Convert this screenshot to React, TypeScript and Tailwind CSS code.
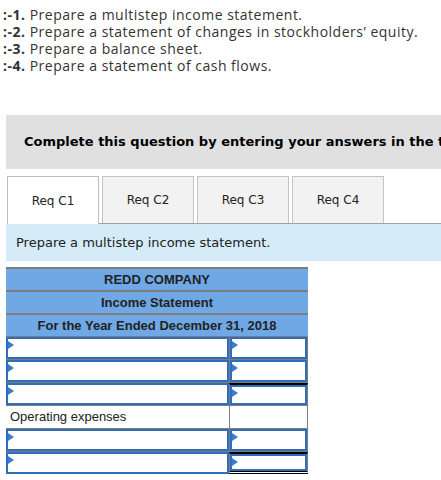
import type { ReactNode } from "react";

const parts = [
  { num: "-1.", text: "Prepare a multistep income statement." },
  { num: "-2.", text: "Prepare a statement of changes in stockholders’ equity." },
  { num: "-3.", text: "Prepare a balance sheet." },
  { num: "-4.", text: "Prepare a statement of cash flows." },
];

const tabs = ["Req C2", "Req C3", "Req C4"];

type Rule = "none" | "top" | "total";

interface Row {
  label?: string;
  rule: Rule;
}

const rows: Row[] = [
  { rule: "none" },
  { rule: "none" },
  { rule: "top" },
  { label: "Operating expenses", rule: "none" },
  { rule: "none" },
  { rule: "total" },
];

function Marker() {
  return (
    <span className="absolute left-0 top-[2px] h-0 w-0 border-y-[4px] border-l-[6px] border-y-transparent border-l-[#3a7bd5]" />
  );
}

function InputBox() {
  return (
    <div className="relative h-full w-full border-2 border-[#2f6dbd] bg-white">
      <Marker />
    </div>
  );
}

function HeaderRow({ children }: { children: ReactNode }) {
  return (
    <div className="flex h-[23px] items-center justify-center border-t-2 border-[#7d7d7d] bg-[#6fa8e4] text-[13px] font-bold text-[#222]">
      {children}
    </div>
  );
}

function AmountCell({ rule, empty }: { rule: Rule; empty?: boolean }) {
  const top = rule === "top" || rule === "total" ? "border-t-2 border-t-black" : "";
  const bottom = rule === "total" ? "border-b-[3px] border-double border-b-black" : "";
  return (
    <div className={`flex flex-col border-l border-r border-[#7d7d7d] ${top} ${bottom}`}>
      {empty ? <div className="h-full" /> : <InputBox />}
    </div>
  );
}

export default function App() {
  return (
    <div className="h-[480px] w-[441px] overflow-hidden bg-white">
      <ul className="pl-[3px] pt-[6px] font-['Open_Sans',sans-serif] text-[14px] leading-[17px] tracking-[0.5px] text-[#333]">
        {parts.map((p) => (
          <li key={p.num} className="whitespace-nowrap">
            <b className="font-bold">:{p.num}</b> {p.text}
          </li>
        ))}
      </ul>

      <div className="ml-[6px] mt-[41px] flex h-[54px] items-center overflow-hidden whitespace-nowrap bg-[#e0e0e0] pl-[18px] font-['DejaVu_Sans',Verdana,sans-serif] text-[13px] font-bold text-black">
        Complete this question by entering your answers in the tabs below.
      </div>

      <div className="font-['DejaVu_Sans',Verdana,sans-serif] text-[#222]">
        <div className="ml-[7px] mt-[7px] flex h-[48px] text-[12px]">
          <div className="flex w-[92px] items-center justify-center border border-b-0 border-[#bdbdbd] bg-white">
            Req C1
          </div>
          <div className="flex flex-1 gap-[3px] border-b border-[#a0a0a0] pl-[3px]">
            {tabs.map((t) => (
              <div
                key={t}
                className="flex w-[92px] items-center justify-center border border-b-0 border-[#c4c4c4] bg-[#f2f2f2]"
              >
                {t}
              </div>
            ))}
          </div>
        </div>

        <div className="ml-[6px] flex h-[37px] items-center bg-[#d6ebf8] pl-[10px] text-[13px]">
          Prepare a multistep income statement.
        </div>
      </div>

      <div className="ml-[6px] mt-[6px] w-[302px] font-['Liberation_Sans',Arial,sans-serif] text-[13px] text-[#222]">
        <HeaderRow>REDD COMPANY</HeaderRow>
        <HeaderRow>Income Statement</HeaderRow>
        <HeaderRow>For the Year Ended December 31, 2018</HeaderRow>

        {rows.map((r, i) => (
          <div key={i} className="grid h-[23px] grid-cols-[223px_79px] border-t border-[#7d7d7d]">
            {r.label ? (
              <div className="flex items-center pl-[4px]">{r.label}</div>
            ) : (
              <InputBox />
            )}
            <AmountCell rule={r.rule} empty={!!r.label} />
          </div>
        ))}
      </div>
    </div>
  );
}
